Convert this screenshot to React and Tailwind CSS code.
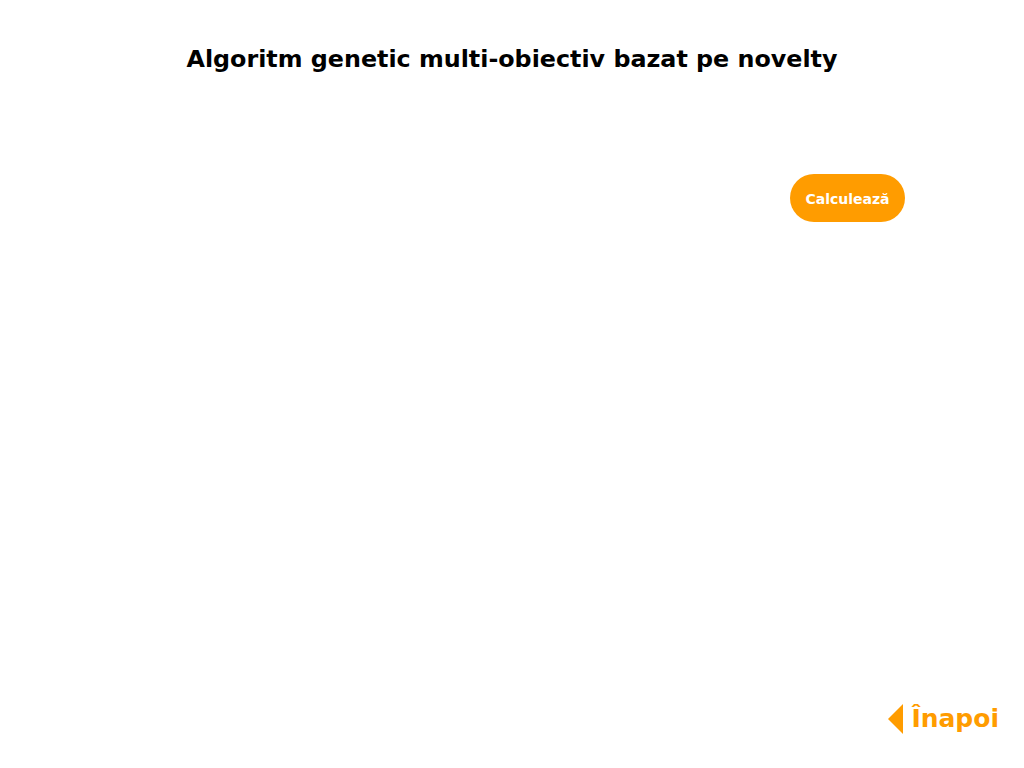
export default function App() {
  return (
    <div className="w-[1024px] h-[768px] bg-white relative flex flex-col font-['DejaVu_Sans',sans-serif]">
      <h1 className="pt-[44px] text-center text-[23.8px] font-bold text-black leading-[30px]">
        Algoritm genetic multi-obiectiv bazat pe novelty
      </h1>
      <div className="flex justify-end pr-[119px] mt-[100px]">
        <button className="w-[115px] h-[48px] rounded-full bg-[#ff9c00] text-white text-[14px] font-bold pt-[2px]">
          Calculează
        </button>
      </div>
      <div className="mt-auto flex justify-end items-center gap-[7px] pr-[25px] pb-[34px]">
        <svg width="16" height="30" viewBox="0 0 16 30">
          <polygon points="15,0 15,30 0,15" fill="#ff9c00" />
        </svg>
        <span className="text-[25px] font-bold text-[#ff9c00] leading-[30px]">Înapoi</span>
      </div>
    </div>
  );
}
